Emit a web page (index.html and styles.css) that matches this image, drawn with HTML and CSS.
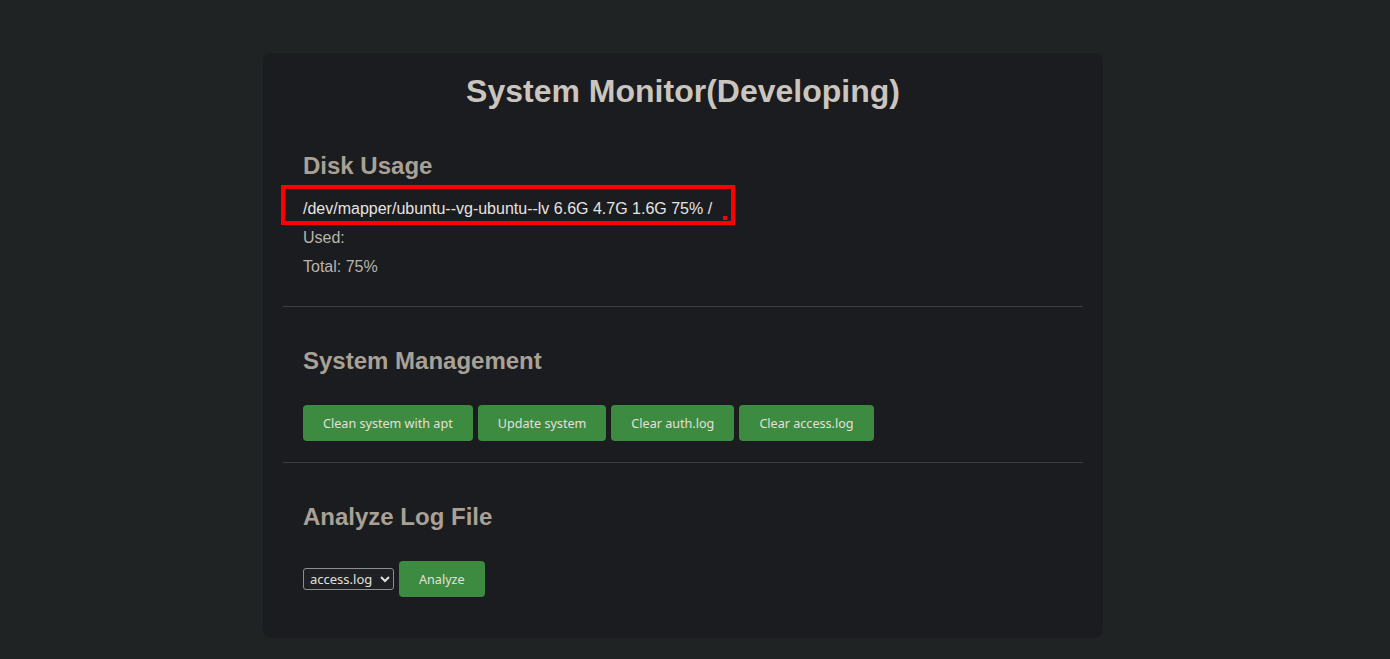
FILE: index.html
```html
<!DOCTYPE html>
<html lang="en">
<head>
    <meta charset="UTF-8">
    <meta name="viewport" content="width=device-width, initial-scale=1.0">
    <title>System Monitor</title>
    <link rel="stylesheet" href="styles.css">
</head>
<body>

<div class="container">
    <h1>System Monitor(Developing)</h1>

    <div class="section disk">
        <h2>Disk Usage</h2>
        <p class="disk-line">/dev/mapper/ubuntu--vg-ubuntu--lv 6.6G 4.7G 1.6G 75% /</p>
        <p class="muted">Used:</p>
        <p class="muted">Total: 75%</p>
    </div>

    <hr>

    <div class="section">
        <h2>System Management</h2>
        <div class="actions">
            <button type="button">Clean system with apt</button>
            <button type="button">Update system</button>
            <button type="button">Clear auth.log</button>
            <button type="button">Clear access.log</button>
        </div>
    </div>

    <hr>

    <div class="section last">
        <h2>Analyze Log File</h2>
        <div class="actions">
            <select id="logFile">
                <option>access.log</option>
                <option>auth.log</option>
            </select>
            <button type="button">Analyze</button>
        </div>
    </div>
</div>

</body>
</html>
```

FILE: styles.css
```css
body {
    margin: 0;
    background-color: #202324;
    font-family: "Liberation Sans", Arial, sans-serif;
    padding: 53px 24px 0 0;
}

.container {
    width: 800px;
    margin: 0 auto;
    padding: 20px 20px 20px;
    background-color: #1b1c1f;
    border-radius: 8px;
}

h1 {
    margin: 0 0 42px;
    font-size: 32px;
    line-height: 37px;
    text-align: center;
    color: #cac5be;
}

h2 {
    margin: 0;
    font-size: 24px;
    line-height: 28px;
    color: #a9a196;
}

.section {
    padding: 0 20px 21px;
}

.disk {
    padding-bottom: 25px;
}

.disk h2 {
    margin-bottom: 14px;
}

p {
    margin: 0;
    font-size: 16px;
    line-height: 29px;
}

.disk-line {
    position: relative;
    color: #e6e4e1;
}

/* red highlight frame */
.disk-line::after {
    content: "";
    position: absolute;
    left: -22px;
    top: -9px;
    width: 446px;
    height: 32px;
    border: 4px solid #ff0000;
}

.disk-line::before {
    content: "";
    position: absolute;
    left: 420px;
    top: 22px;
    width: 4px;
    height: 4px;
    background-color: #ff0000;
}

.muted {
    color: #b9b4ac;
}

hr {
    margin: 0 0 40px;
    border: none;
    border-top: 1px solid #3a3e41;
}

.actions {
    display: flex;
    align-items: center;
    gap: 5px;
    margin-top: 30px;
}

button {
    height: 36px;
    background-color: #3d8b40;
    color: #e2e0dc;
    font-family: "Noto Sans", sans-serif;
    font-size: 12.6px;
    line-height: 16px;
    padding: 2px 20px 0;
    border: none;
    border-radius: 4px;
    cursor: pointer;
}

button:hover {
    background-color: #357a38;
}

select {
    color-scheme: dark;
    height: 22px;
    width: 91px;
    padding: 0 2px;
    font-family: "Noto Sans", sans-serif;
    font-size: 13px;
    color: #e2e0dc;
    background-color: #1e2024;
    border: 1px solid #8a8f96;
    border-radius: 3px;
}
```
